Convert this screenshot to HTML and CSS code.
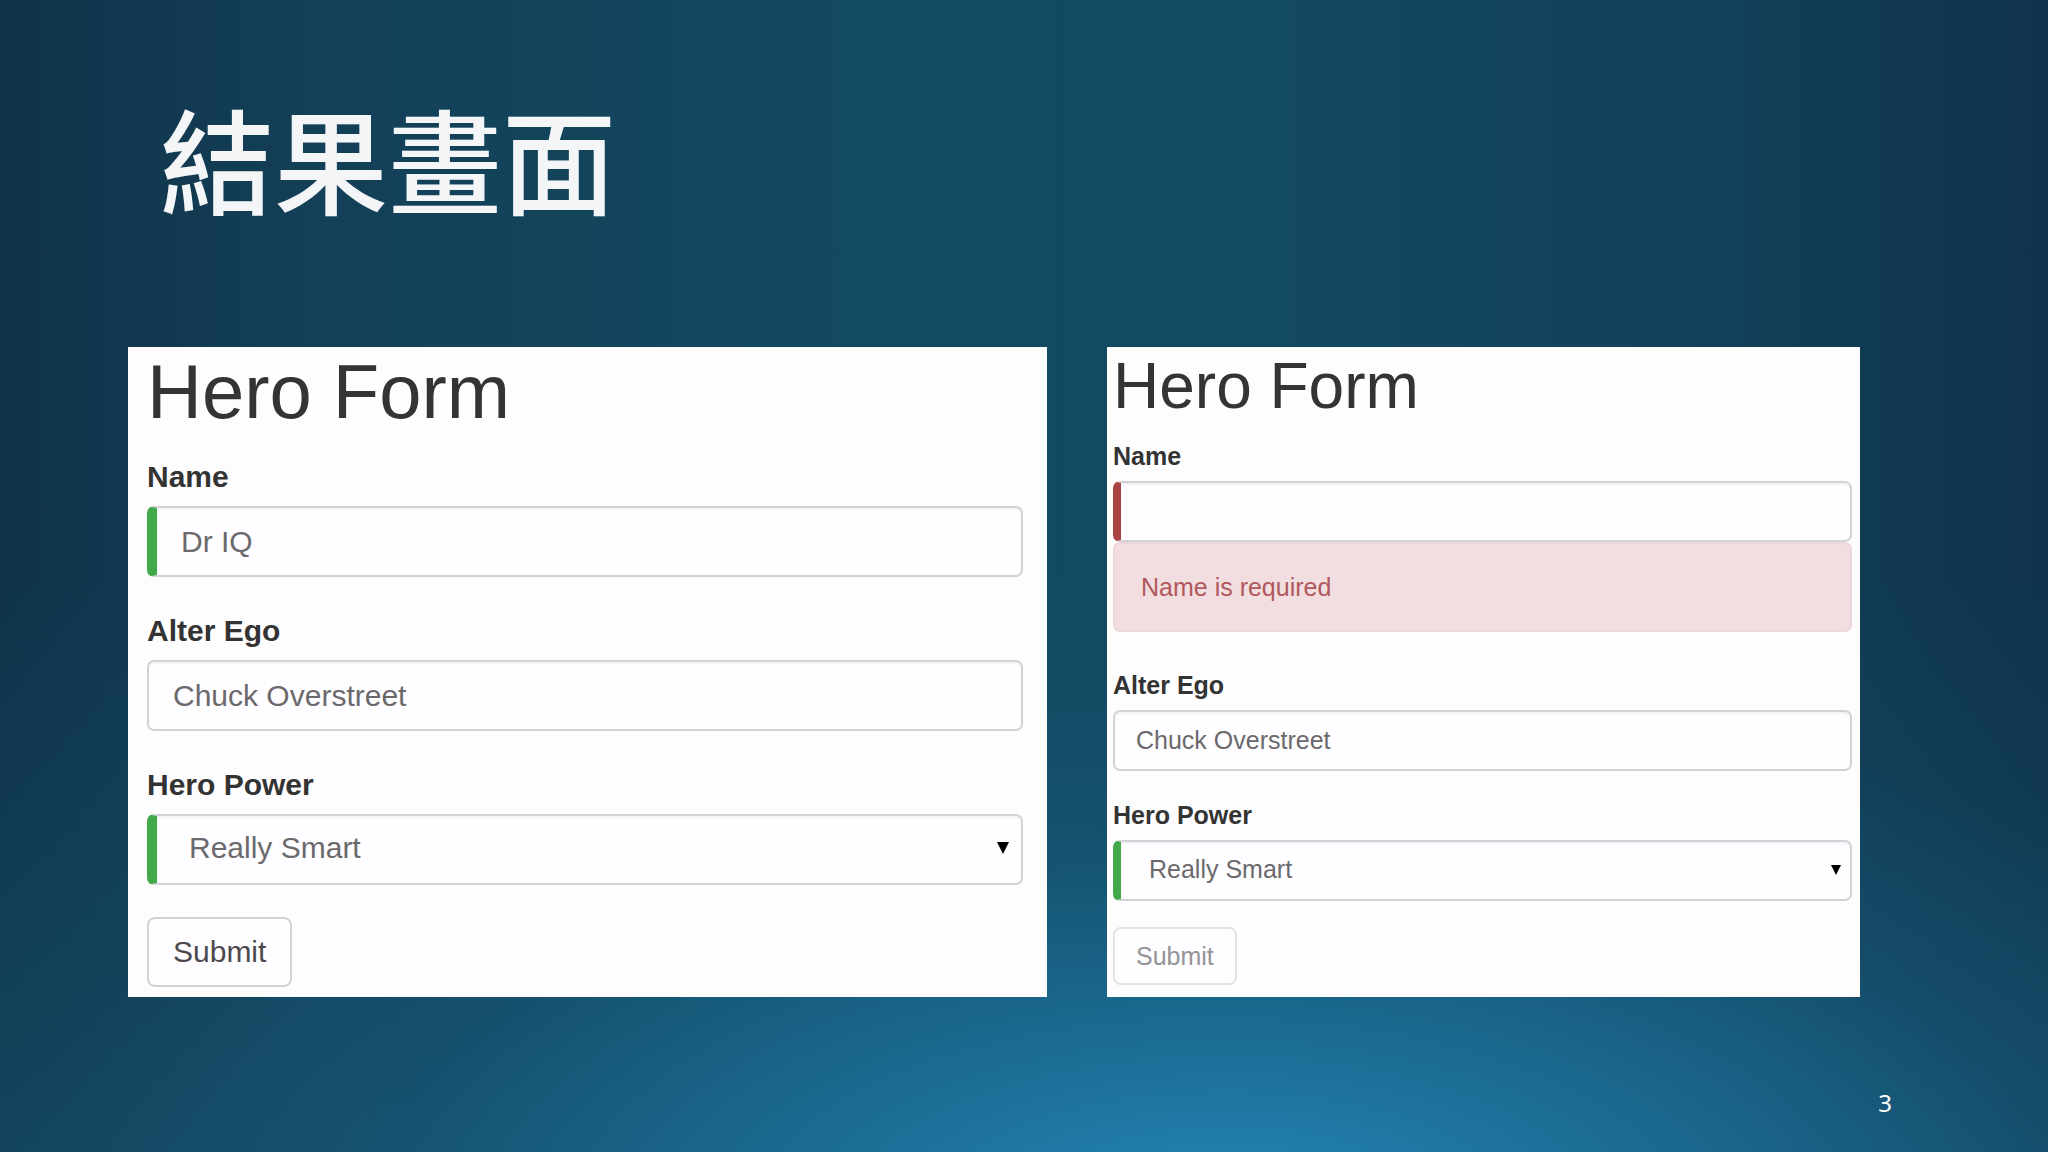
FILE: index.html
```html
<!DOCTYPE html>
<html lang="zh-Hant">
<head>
    <meta charset="UTF-8">
    <meta name="viewport" content="width=device-width, initial-scale=1.0">
    <title>結果畫面</title>
    <link rel="stylesheet" href="styles.css">
</head>
<body>
    <header class="slide-header">
        <h1>結果畫面</h1>
    </header>

    <main class="panels">
        <!-- 驗證通過 -->
        <form class="hero-form form-large">
            <h2>Hero Form</h2>
            <div class="form-group">
                <label for="name">Name</label>
                <input type="text" id="name" class="form-control valid" value="Dr IQ">
            </div>
            <div class="form-group">
                <label for="alter_ego">Alter Ego</label>
                <input type="text" id="alter_ego" class="form-control" value="Chuck Overstreet">
            </div>
            <div class="form-group">
                <label for="power">Hero Power</label>
                <div class="select-box">
                    <select id="power" class="form-control valid">
                        <option>Really Smart</option>
                    </select>
                    <svg class="arrow" viewBox="0 0 10 10"><path d="M0 0h10L5 10z"/></svg>
                </div>
            </div>
            <button type="button" class="btn">Submit</button>
        </form>

        <!-- 驗證失敗 -->
        <form class="hero-form form-small">
            <h2>Hero Form</h2>
            <div class="form-group">
                <label for="name_empty">Name</label>
                <input type="text" id="name_empty" class="form-control invalid">
                <div class="alert">Name is required</div>
            </div>
            <div class="form-group">
                <label for="alter_ego_2">Alter Ego</label>
                <input type="text" id="alter_ego_2" class="form-control" value="Chuck Overstreet">
            </div>
            <div class="form-group">
                <label for="power_2">Hero Power</label>
                <div class="select-box">
                    <select id="power_2" class="form-control valid">
                        <option>Really Smart</option>
                    </select>
                    <svg class="arrow" viewBox="0 0 10 10"><path d="M0 0h10L5 10z"/></svg>
                </div>
            </div>
            <button type="button" class="btn" disabled>Submit</button>
        </form>
    </main>

    <footer class="slide-footer">3</footer>
</body>
</html>
```
FILE: styles.css
```css
* {
    box-sizing: border-box;
}
body {
    display: flex;
    flex-direction: column;
    min-height: 100vh;
    margin: 0;
    font-family: "Liberation Sans", Arial, "Noto Sans CJK TC", sans-serif;
    /* 底部亮光 + 左右兩側暗角 */
    background:
        radial-gradient(ellipse 60% 46% at 60% 106%, #2488b8 0%, rgba(30, 118, 162, 0.75) 35%, rgba(24, 96, 134, 0.3) 70%, rgba(20, 80, 112, 0) 100%),
        linear-gradient(to bottom, rgba(22, 86, 114, 0) 50%, rgba(22, 86, 114, 0.5) 100%),
        linear-gradient(to right, #0f3349 0%, #133f57 15%, #124a62 42%, #124963 62%, #123f59 85%, #0f334a 100%);
}
.slide-header {
    padding: 87px 160px 0;
    height: 347px;
}
.slide-header h1 {
    margin: 0;
    font-family: "Noto Sans CJK TC", sans-serif;
    font-size: 114px;
    font-weight: 500;
    line-height: 140px;
    color: #f3f5f7;
}
.panels {
    display: grid;
    grid-template-columns: 919fr 753fr;
    gap: 60px;
    margin: 0 188px 0 128px;
}
.hero-form {
    background-color: #fefdfe;
    color: #333;
}
.hero-form h2 {
    font-weight: normal;
    color: #353335;
}
.form-group label {
    display: block;
    font-weight: bold;
}
.form-control {
    display: block;
    width: 100%;
    border: 2px solid #d3d1d5;
    border-radius: 7px;
    background-color: #fefdff;
    box-shadow: inset 0 2px 2px rgba(0, 0, 0, 0.05);
    color: #6b696c;
    font: inherit;
    appearance: none;
}
.select-box {
    position: relative;
}
.arrow {
    position: absolute; /* 疊在下拉選單上 */
    pointer-events: none;
    fill: #000;
}
.btn {
    display: block;
    border: 2px solid #d3d1d5;
    border-radius: 8px;
    background-color: #fefdff;
    color: #4b494c;
    font: inherit;
}
.btn:disabled {
    border-color: #e3e3e7;
    color: #949396;
}

/* 左側表單 */
.form-large {
    padding: 3px 24px 10px 19px;
    font-size: 30px;
    line-height: 43px;
}
.form-large h2 {
    margin: 0 0 21px;
    font-size: 76px;
    line-height: 84px;
}
.form-large .form-group {
    margin-bottom: 32px;
}
.form-large label {
    margin-bottom: 8px;
}
.form-large .form-control {
    height: 71px;
    padding: 0 24px;
}
.form-large select.form-control {
    padding: 0 32px 5px;
}
.form-large .arrow {
    top: 28px;
    right: 14px;
    width: 12px;
    height: 12px;
}
.form-large .btn {
    height: 70px;
    padding: 0 24px 2px;
}

/* 右側表單 */
.form-small {
    padding: 4px 8px 12px 6px;
    font-size: 25px;
    line-height: 36px;
}
.form-small h2 {
    margin: 0 0 17px;
    font-size: 64px;
    line-height: 70px;
}
.form-small .form-group {
    margin-bottom: 26px;
}
.form-small label {
    margin-bottom: 7px;
}
.form-small .form-control {
    height: 61px;
    padding: 0 21px;
}
.form-small select.form-control {
    padding: 0 28px 3px;
}
.form-small .arrow {
    top: 25px;
    right: 11px;
    width: 10px;
    height: 10px;
}
.form-small .btn {
    height: 58px;
    padding: 0 21px;
}
.alert {
    margin-bottom: 35px;
    padding: 25px 26px;
    border: 2px solid #ecd6da;
    border-radius: 7px;
    background-color: #f2dee0;
    color: #b0585c;
}

/* 紅綠驗證標示 */
.form-large .valid {
    border-left: 10px solid #42a948;
}
.form-small .valid {
    border-left: 8px solid #42a948;
}
.form-small .invalid {
    border-left: 8px solid #a94442;
}

.slide-footer {
    margin: 88px 156px 32px 0;
    text-align: right;
    font-family: "Noto Sans", sans-serif;
    font-size: 24px;
    line-height: 36px;
    color: #fff;
}
```
